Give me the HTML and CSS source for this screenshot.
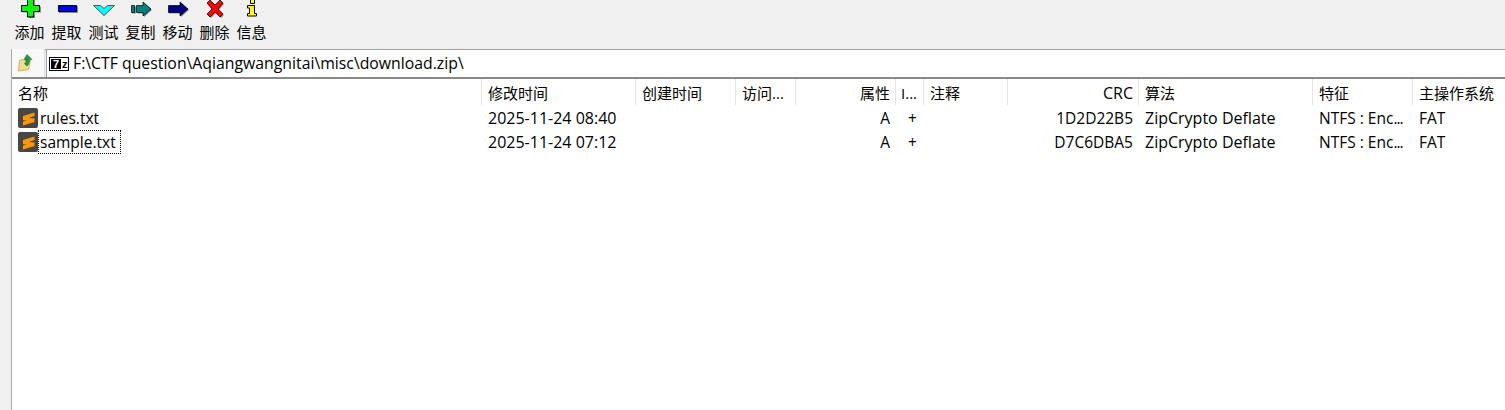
FILE: index.html
```html
<!DOCTYPE html>
<html lang="zh-CN">
<head>
  <meta charset="UTF-8" />
  <title>download.zip</title>
  <link rel="stylesheet" href="styles.css">
</head>
<body>
  <div class="window">
    <!-- Toolbar -->
    <div class="toolbar">
      <div class="tool">
        <svg viewBox="0 0 26 20"><path class="shade" d="M12 0h6v6.500h6v6h-6V18h-6v-5.500H6v-6h6z"/><path fill="#00ff00" stroke="#000" d="M10.500-1h6v6.500h6v6h-6V17h-6v-5.500h-6v-6h6z"/></svg>
        <span>添加</span>
      </div>
      <div class="tool">
        <svg viewBox="0 0 26 20"><path class="shade" d="M5 6h19v7H5z"/><path fill="#0000ff" stroke="#000" d="M4.500 5.500h18v6h-18z"/></svg>
        <span>提取</span>
      </div>
      <div class="tool">
        <svg viewBox="0 0 26 20"><path fill="#00ffff" stroke="#555" d="M2.500 5.500h7l3.500 3 3.500-3h7L13 15.500z"/></svg>
        <span>测试</span>
      </div>
      <div class="tool">
        <svg viewBox="0 0 26 20"><path class="shade" d="M4 6.500h4v7H4zM10 6.500h6V3l8 7-8 7v-3.500h-6z"/><path fill="#008080" stroke="#000" stroke-width=".7" d="M3.500 5.500h3v7h-3zM8.500 5.500h6.500V2l8 7-8 7v-3.500H8.500z"/></svg>
        <span>复制</span>
      </div>
      <div class="tool">
        <svg viewBox="0 0 26 20"><path class="shade" d="M4 6.500h12V3l8 7-8 7v-3.500H4z"/><path fill="#000080" stroke="#000" stroke-width=".7" d="M3.500 5.500h11.500V2l8 7-8 7v-3.500H3.500z"/></svg>
        <span>移动</span>
      </div>
      <div class="tool">
        <svg viewBox="0 0 26 20"><path class="shade" d="M9 1l5 5 5-5 3 3-5 6 5 5-3 3-5-5-5 5-3-3 5-5-5-6z"/><path fill="#ff0000" stroke="#000" stroke-width=".7" d="M8 0l5 5 5-5 3 3-5 6 5 5-3 3-5-5-5 5-3-3 5-5-5-6z"/></svg>
        <span>删除</span>
      </div>
      <div class="tool">
        <svg viewBox="0 0 26 20"><path fill="#ffff00" stroke="#000" d="M11.500-.5h4v4h-4zM8.500 5.500h7v8h2v2.500h-9v-2.500h2v-5.500h-2z"/></svg>
        <span>信息</span>
      </div>
    </div>

    <!-- Address row -->
    <div class="address-row">
      <div class="up-btn">
        <svg viewBox="0 0 18 18"><path fill="#f6dc8e" stroke="#c9a24a" stroke-width=".8" d="M3.500 6.500l3-1 2 1 6-1-2 10-10 1.500z"/><path fill="#1c9a3c" stroke="#0d6b25" stroke-width=".5" d="M11 .5l5 5h-2.500c0 3-.5 5-2.500 6.500-1-.5-2-1.500-2.500-3 1 .5 1.500 0 1.500-3.500H8z"/></svg>
      </div>
      <div class="address">
        <span class="zip-icon"><b>7</b><i>z</i></span>
        <span class="path">F:\CTF question\Aqiangwangnitai\misc\download.zip\</span>
      </div>
    </div>

    <!-- File list -->
    <div class="list">
      <div class="row head">
        <div class="cell">名称</div>
        <div class="cell">修改时间</div>
        <div class="cell">创建时间</div>
        <div class="cell">访问...</div>
        <div class="cell right">属性</div>
        <div class="cell narrow">I...</div>
        <div class="cell">注释</div>
        <div class="cell right wide">CRC</div>
        <div class="cell">算法</div>
        <div class="cell">特征</div>
        <div class="cell">主操作系统</div>
      </div>
      <div class="row">
        <div class="cell name">
          <svg class="file-icon" viewBox="0 0 20 20"><rect width="20" height="20" rx="2" fill="#474747"/><path fill="#ff9800" d="M5 8l11.500-3.500V8L5 12zM5 8.500l11.500 2.500v3L5 12zM5 13.500l11.500-3.500v4L5 17.500z"/></svg>
          <span class="file-name">rules.txt</span>
        </div>
        <div class="cell wide">2025-11-24 08:40</div>
        <div class="cell"></div>
        <div class="cell"></div>
        <div class="cell right">A</div>
        <div class="cell plus">+</div>
        <div class="cell"></div>
        <div class="cell right">1D2D22B5</div>
        <div class="cell wide">ZipCrypto Deflate</div>
        <div class="cell">NTFS : Enc<span class="dots">...</span></div>
        <div class="cell">FAT</div>
      </div>
      <div class="row">
        <div class="cell name">
          <svg class="file-icon" viewBox="0 0 20 20"><rect width="20" height="20" rx="2" fill="#474747"/><path fill="#ff9800" d="M5 8l11.500-3.500V8L5 12zM5 8.500l11.500 2.500v3L5 12zM5 13.500l11.500-3.500v4L5 17.500z"/></svg>
          <span class="file-name focused">sample.txt</span>
        </div>
        <div class="cell wide">2025-11-24 07:12</div>
        <div class="cell"></div>
        <div class="cell"></div>
        <div class="cell right">A</div>
        <div class="cell plus">+</div>
        <div class="cell"></div>
        <div class="cell right">D7C6DBA5</div>
        <div class="cell wide">ZipCrypto Deflate</div>
        <div class="cell">NTFS : Enc<span class="dots">...</span></div>
        <div class="cell">FAT</div>
      </div>
    </div>
  </div>
</body>
</html>
```

FILE: styles.css
```css
html, body {
  margin: 0;
  padding: 0;
  height: 100%;
  overflow: hidden;
}

body {
  background: #f0f0f0;
  color: #000;
  font-family: "Open Sans", "Noto Sans CJK SC", sans-serif;
  font-size: 15.500px;
}

.window {
  height: 410px;
  display: flex;
  flex-direction: column;
  margin-left: 11px;
  border-left: 1px solid #a9a9a9;
  box-sizing: border-box;
}

.toolbar {
  height: 49px;
  flex: none;
  display: flex;
  margin-left: -1px;
  background: #f0f0f0;
}

.tool {
  width: 37px;
  display: flex;
  flex-direction: column;
  align-items: center;
  font-family: "Noto Sans CJK SC", sans-serif;
  font-size: 15px;
  line-height: 22px;
}

.tool svg {
  width: 26px;
  height: 20px;
  margin-bottom: 1px;
  flex: none;
}

.shade {
  fill: #8c8c8c;
}

.address-row {
  height: 27px;
  flex: none;
  display: flex;
  background: #f0f0f0;
  border-top: 1px solid #a0a0a0;
}

.up-btn {
  width: 32px;
  margin-top: -1px;
  display: flex;
  align-items: center;
  justify-content: center;
  background: #f8f8f8;
  border-right: 1px solid #dcdcdc;
}

.up-btn svg {
  width: 18px;
  height: 18px;
  margin-right: 6px;
}

.address {
  flex: 1;
  display: flex;
  align-items: center;
  gap: 4px;
  margin-left: 1px;
  background: #fff;
  border-left: 1px solid #a0a0a0;
  padding-left: 2px;
  white-space: nowrap;
}

.path {
  font-size: 15.800px;
  margin-top: -1px;
}

.zip-icon {
  display: flex;
  width: 18px;
  height: 10px;
  margin-top: 1px;
  padding: 1px 0;
  border: 1px solid #000;
  background: #fff;
  font-family: "Liberation Sans", sans-serif;
  font-size: 11px;
  line-height: 10px;
  font-weight: bold;
}

.zip-icon b {
  width: 10px;
  margin-left: 1px;
  background: #000;
  color: #fff;
  text-align: center;
}

.zip-icon i {
  font-style: normal;
  padding-left: 1px;
}

.list {
  flex: 1;
  background: #fff;
  border-top: 2px solid #898989;
}

.row {
  display: grid;
  grid-template-columns: 470px 154px 100px 60px 100px 28px 84px 131px 174px 100px 92px;
  height: 24px;
  line-height: 24px;
  white-space: nowrap;
}

.head {
  height: 27px;
  line-height: 28px;
  font-size: 15px;
}

.head .cell {
  height: 26px;
  border-right: 1px solid #e5e5e5;
  box-sizing: border-box;
}

.head .cell.right {
  padding-right: 5px;
}

.head .cell.wide {
  font-size: 16px;
}

.head .cell:last-child {
  border-right: none;
}

.cell {
  padding: 0 6px;
  overflow: hidden;
}

.right {
  text-align: right;
}

.head .narrow {
  padding: 0 0 0 5px;
}

.wide {
  font-size: 16px;
}

.dots {
  letter-spacing: -1px;
}

.plus {
  padding-left: 12px;
}

.name {
  display: flex;
  padding-left: 6px;
}

.file-icon {
  width: 20px;
  height: 20px;
  flex: none;
  margin-top: 2px;
}

.file-name {
  height: 24px;
  line-height: 24px;
  padding: 0 2px;
  box-sizing: border-box;
}

.focused {
  padding-right: 5px;
  outline: 1px dotted #000;
  outline-offset: -1px;
}
```
